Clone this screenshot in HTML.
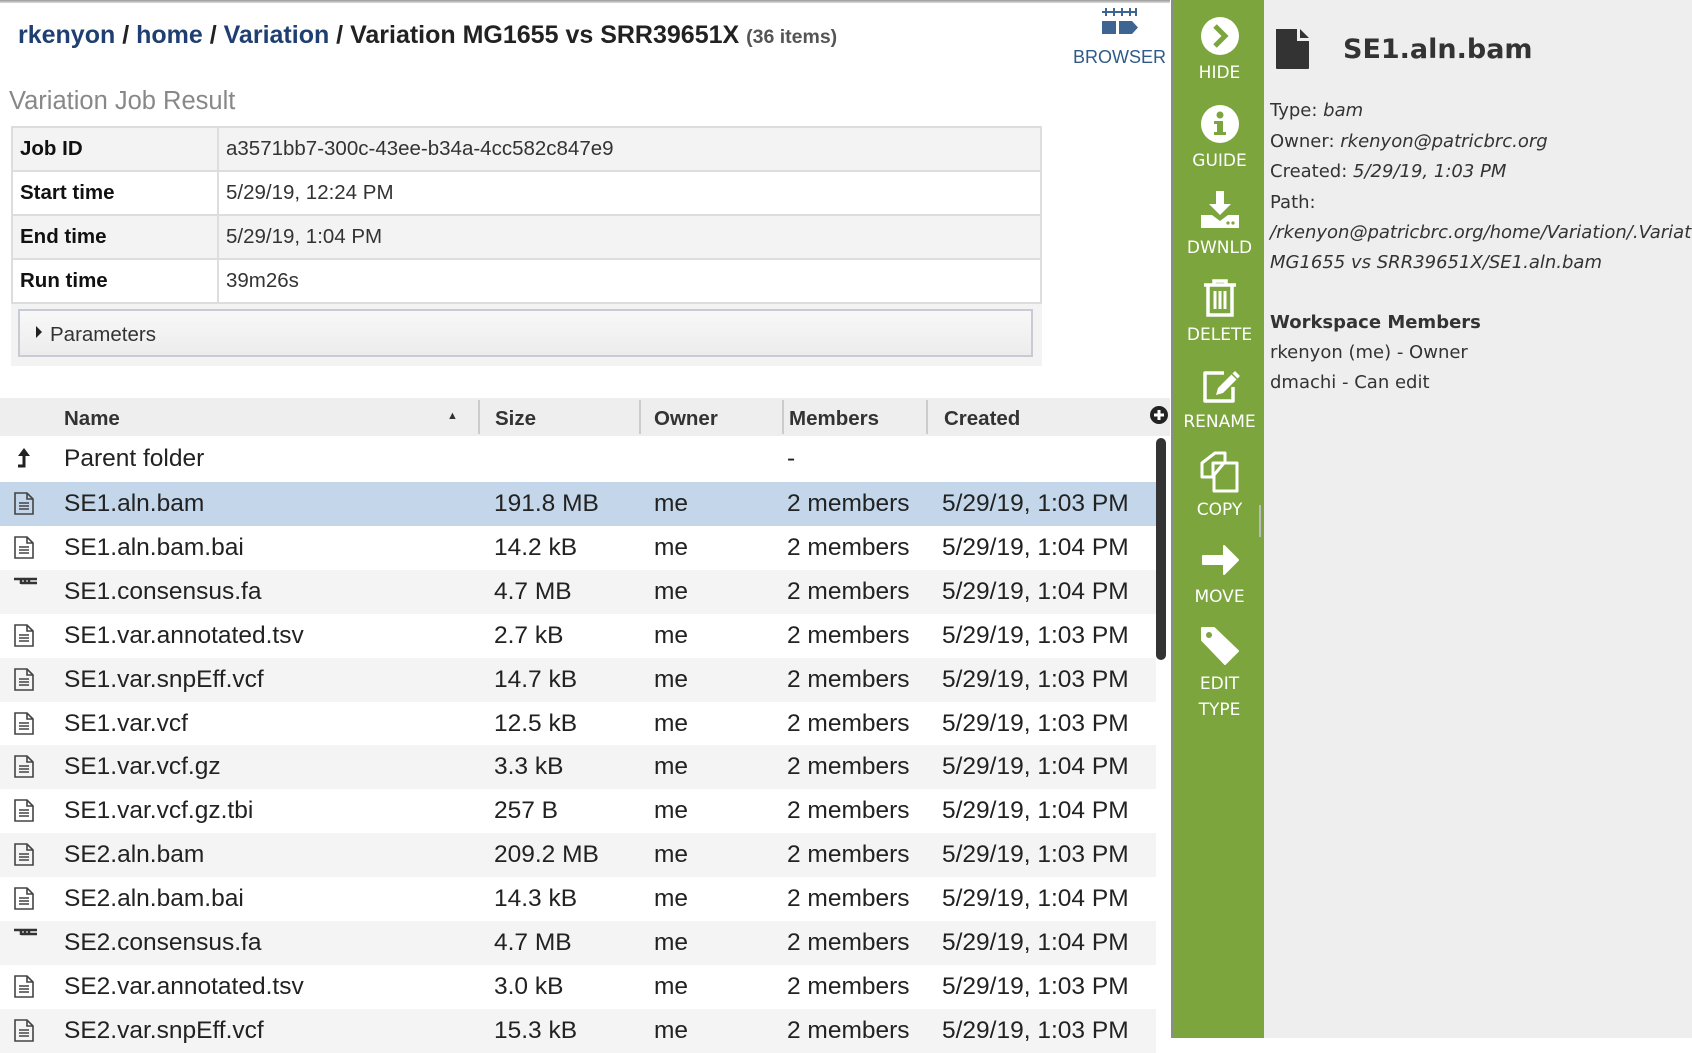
<!DOCTYPE html>
<html><head><meta charset="utf-8"><style>
*{margin:0;padding:0;box-sizing:border-box}
body{width:1692px;height:1038px;overflow:hidden;background:#fff;font-family:"Liberation Sans",Arial,sans-serif;color:#333;position:relative}
.a{position:absolute;white-space:nowrap}
.topline{position:absolute;left:0;top:0;width:1170px;height:3px;background:linear-gradient(#999,#ddd)}
.bc{left:18px;top:21px;font-size:25px;font-weight:bold;color:#222}
.bc a{color:#1f3f72;text-decoration:none}
.bc small{font-size:19.5px;color:#555}
.title{left:9px;top:87px;font-size:25.5px;color:#888}
.jt{position:absolute;left:11px;top:126px;width:1031px;border-collapse:collapse;font-size:20.5px}
.jt td{border:2px solid #ddd;height:44px;padding:0 7px;vertical-align:middle}
.jt tr:nth-child(odd) td{background:#f3f3f3}
.jt td:first-child{width:206px;font-weight:bold;color:#111}
.jbg{position:absolute;left:11px;top:304px;width:1031px;height:62px;background:#f3f3f3}
.params{position:absolute;left:18px;top:309px;width:1015px;height:48px;border:2px solid #c8cbd6;background:linear-gradient(#f8f8f8,#ececec);font-size:20.5px;padding:12px 0 0 30px}
.params:before{content:"";position:absolute;left:16px;top:15px;border-left:6px solid #222;border-top:6px solid transparent;border-bottom:6px solid transparent}
.gh{position:absolute;left:0;top:398px;width:1170px;height:38px;background:#eee;font-size:20.5px;font-weight:bold;color:#333}
.gh span{position:absolute;top:9px}
.gh i{position:absolute;top:2px;width:2px;height:34px;background:#ccc}
.row{position:absolute;left:0;width:1156px;height:44px;font-size:24.5px;color:#222}
.row span{position:absolute;top:8px}
.g{background:#f4f4f4}.sel{background:#c3d6ea}
.ic{position:absolute;left:13px;top:10px}
.side{position:absolute;left:1171px;top:0;width:93px;height:1038px;background:#7ca53e;border-left:2px solid #8c8c8c}
.side div{position:absolute;width:93px;text-align:center;color:#fff;font-size:17px;font-family:"DejaVu Sans",sans-serif;left:0}
.side svg{position:absolute;left:27px}
.rp{position:absolute;left:1264px;top:0;width:428px;height:1038px;background:#eee;font-family:"DejaVu Sans",sans-serif;color:#333;font-size:18px}
.rp .l{position:absolute;left:6px;white-space:nowrap}
</style></head><body>
<div class="topline"></div>
<div class="a bc"><a>rkenyon</a> / <a>home</a> / <a>Variation</a> / Variation MG1655 vs SRR39651X <small>(36 items)</small></div>
<svg class="a" style="left:1100px;top:8px" width="40" height="28" viewBox="0 0 40 28"><path d="M2 4H36M6 0V8M14 0V8M22 0V8M30 0V8M36 0V8" stroke="#3e6591" stroke-width="2"/><rect x="2" y="13" width="14" height="13" fill="#3e6591"/><path d="M19 13H32L38 19.5L32 26H19Z" fill="#3e6591"/></svg>
<div class="a" style="left:1073px;top:47px;font-size:18px;color:#2f5a8a">BROWSER</div>
<div class="a title">Variation Job Result</div>
<div class="jbg"></div>
<table class="jt">
<tr><td>Job ID</td><td>a3571bb7-300c-43ee-b34a-4cc582c847e9</td></tr>
<tr><td>Start time</td><td>5/29/19, 12:24 PM</td></tr>
<tr><td>End time</td><td>5/29/19, 1:04 PM</td></tr>
<tr><td>Run time</td><td>39m26s</td></tr>
</table>
<div class="params">Parameters</div>

<div class="gh">
<span style="left:64px">Name</span><span style="left:447px;top:12px;font-size:11px">&#9650;</span><i style="left:478px"></i>
<span style="left:495px">Size</span><i style="left:639px"></i>
<span style="left:654px">Owner</span><i style="left:782px"></i>
<span style="left:789px">Members</span><i style="left:926px"></i>
<span style="left:944px">Created</span>
<svg style="position:absolute;left:1149px;top:7px" width="20" height="20"><circle cx="10" cy="10" r="9" fill="#222"/><path d="M10 5V15M5 10H15" stroke="#fff" stroke-width="3"/></svg>
</div>
<div style="position:absolute;left:1156px;top:438px;width:10px;height:222px;background:#333;border-radius:5px"></div>

<div class="row" style="top:437px"><svg class="ic" width="20" height="24"><path d="M11 6V19H5" stroke="#222" stroke-width="3" fill="none"/><path d="M11 1L5 9H17Z" fill="#222"/></svg><span style="left:64px">Parent folder</span><span style="left:787px">-</span></div>
<div id="rows"></div>
<script>
var d=[["SE1.aln.bam","191.8 MB","1:03"],["SE1.aln.bam.bai","14.2 kB","1:04"],["SE1.consensus.fa","4.7 MB","1:04",1],["SE1.var.annotated.tsv","2.7 kB","1:03"],["SE1.var.snpEff.vcf","14.7 kB","1:03"],["SE1.var.vcf","12.5 kB","1:03"],["SE1.var.vcf.gz","3.3 kB","1:04"],["SE1.var.vcf.gz.tbi","257 B","1:04"],["SE2.aln.bam","209.2 MB","1:03"],["SE2.aln.bam.bai","14.3 kB","1:04"],["SE2.consensus.fa","4.7 MB","1:04",1],["SE2.var.annotated.tsv","3.0 kB","1:03"],["SE2.var.snpEff.vcf","15.3 kB","1:03"]];
var doc='<svg class="ic" width="22" height="24"><path d="M2 1H14L20 7V22H2Z M14 1V7H20" fill="none" stroke="#444" stroke-width="1.6"/><path d="M6 11H16M6 14H16M6 17H16" stroke="#444" stroke-width="1.4"/></svg>';
var fa='<svg class="ic" width="26" height="24" style="top:6px"><path d="M1 3H24M8 3V8M12 3V8M16 3V8M8 7H24" stroke="#333" stroke-width="2.5"/></svg>';
var h='';d.forEach(function(r,i){var cls=i==0?'sel':(i%2==0?'g':'');h+='<div class="row '+cls+'" style="top:'+(482+i*43.9)+'px">'+(r[3]?fa:doc)+'<span style="left:64px">'+r[0]+'</span><span style="left:494px">'+r[1]+'</span><span style="left:654px">me</span><span style="left:787px">2 members</span><span style="left:942px">5/29/19, '+r[2]+' PM</span></div>';});
document.getElementById('rows').outerHTML=h;
</script>

<div class="side">
<svg style="top:16px" width="40" height="40" viewBox="0 0 40 40"><circle cx="20" cy="20" r="19" fill="#fff"/><path d="M15 10L25 20L15 30" fill="none" stroke="#7ca53e" stroke-width="5"/></svg>
<div style="top:63px">HIDE</div>
<svg style="top:104px" width="40" height="40" viewBox="0 0 40 40"><circle cx="20" cy="20" r="19" fill="#fff"/><circle cx="20" cy="11" r="3.5" fill="#7ca53e"/><path d="M14 17H23V28H26V31H14V28H17V20H14Z" fill="#7ca53e"/></svg>
<div style="top:151px">GUIDE</div>
<svg style="top:190px" width="40" height="40" viewBox="0 0 40 40"><path d="M16 1H24V14H31L20 25L9 14H16Z" fill="#fff"/><path d="M1 25H12L20 31L28 25H39V38H1Z" fill="#fff"/><circle cx="28" cy="33" r="1.6" fill="#7ca53e"/><circle cx="33" cy="33" r="1.6" fill="#7ca53e"/></svg>
<div style="top:238px">DWNLD</div>
<svg style="top:278px" width="40" height="40" viewBox="0 0 40 40"><path d="M4 7H36M14 7V3H26V7M8 7V37H32V7" fill="none" stroke="#fff" stroke-width="3.5"/><path d="M15 13V31M20 13V31M25 13V31" stroke="#fff" stroke-width="3"/></svg>
<div style="top:325px">DELETE</div>
<svg style="top:365px" width="44" height="40" viewBox="0 0 44 40"><path d="M24 8H5V36H33V22" fill="none" stroke="#fff" stroke-width="3.5" stroke-linejoin="round"/><path d="M16 30L18 23L35 6L40 11L23 28Z" fill="#fff"/><path d="M32 9L37 14" stroke="#7ca53e" stroke-width="1.5"/></svg>
<div style="top:412px">RENAME</div>
<svg style="top:451px" width="44" height="42" viewBox="0 0 44 42"><path d="M15 2H25V12H13V26H2V12Z M13 12L25 12" fill="none" stroke="#fff" stroke-width="3" stroke-linejoin="round"/><path d="M26 12H37V40H14V24L24 12" fill="none" stroke="#fff" stroke-width="3" stroke-linejoin="round"/></svg>
<div style="top:500px">COPY</div>
<svg style="top:540px" width="40" height="40" viewBox="0 0 40 40"><path d="M3 16H24V6L38 20L24 34V24H3Z" fill="#fff" stroke="#fff" stroke-width="2" stroke-linejoin="round"/></svg>
<div style="top:587px">MOVE</div>
<svg style="top:626px" width="40" height="40" viewBox="0 0 40 40"><path d="M2 6V2H14L38 25L25 38L2 14Z" fill="#fff" stroke="#fff" stroke-width="2" stroke-linejoin="round"/><circle cx="9" cy="9" r="3" fill="#7ca53e"/></svg>
<div style="top:674px">EDIT</div>
<div style="top:700px">TYPE</div>
</div>
<div style="position:absolute;left:1259px;top:505px;width:2px;height:32px;background:#bbb"></div>

<div class="rp">
<svg style="position:absolute;left:10px;top:28px" width="36" height="42" viewBox="0 0 36 42"><path d="M2 1H23V13H35V40Q35 41 34 41H3Q2 41 2 40Z" fill="#333"/><path d="M26 1L35 10H26Z" fill="#333"/></svg>
<div class="l" style="left:79px;top:34px;font-size:27px;font-weight:bold">SE1.aln.bam</div>
<div class="l" style="top:100px">Type: <i>bam</i></div>
<div class="l" style="top:131px">Owner: <i>rkenyon@patricbrc.org</i></div>
<div class="l" style="top:161px">Created: <i>5/29/19, 1:03 PM</i></div>
<div class="l" style="top:192px">Path:</div>
<div class="l" style="top:222px"><i>/rkenyon@patricbrc.org/home/Variation/.Variation</i></div>
<div class="l" style="top:252px"><i>MG1655 vs SRR39651X/SE1.aln.bam</i></div>
<div class="l" style="top:312px;font-weight:bold">Workspace Members</div>
<div class="l" style="top:342px">rkenyon (me) - Owner</div>
<div class="l" style="top:372px">dmachi - Can edit</div>
</div>
</body></html>
